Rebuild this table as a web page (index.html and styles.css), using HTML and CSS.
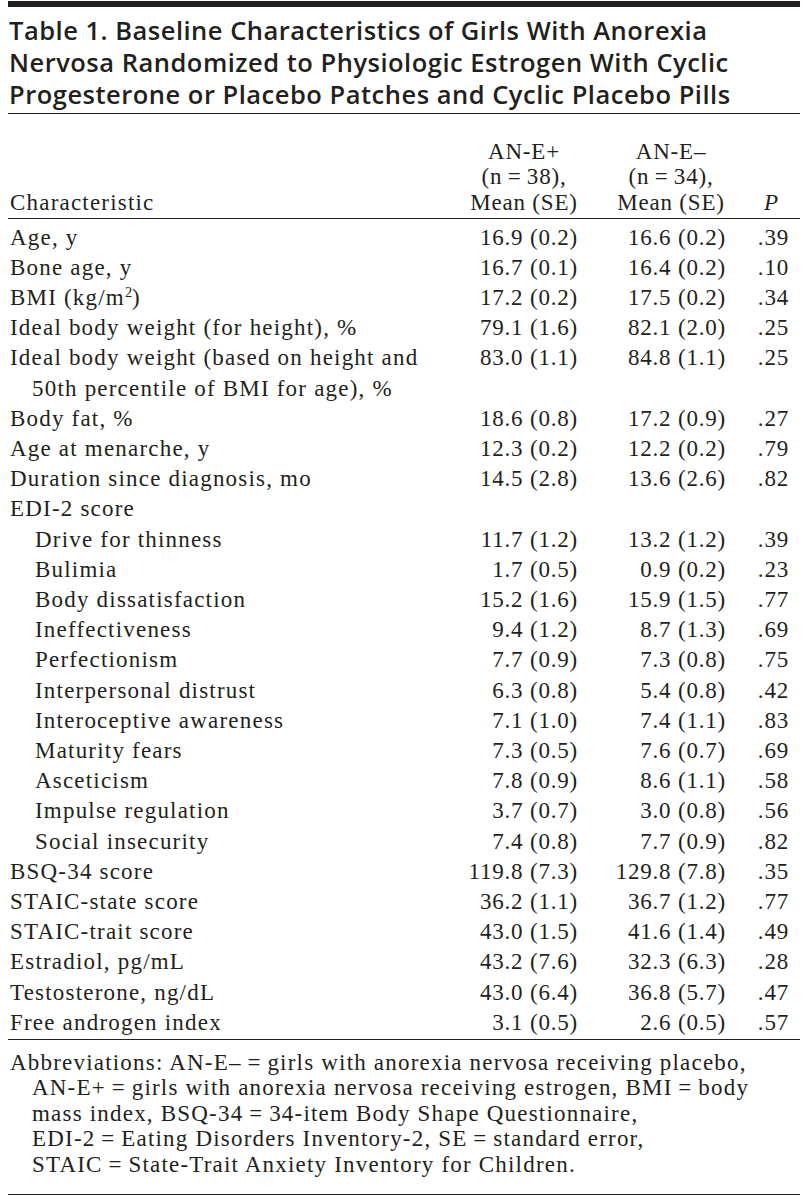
FILE: index.html
```html
<!DOCTYPE html>
<html lang="en">
<head>
<meta charset="utf-8">
<title>Table 1</title>
<link rel="stylesheet" href="styles.css">
</head>
<body>
<div class="page">
  <div class="bar"></div>
  <h1 class="title">Table 1. Baseline Characteristics of Girls With Anorexia<br>Nervosa Randomized to Physiologic Estrogen With Cyclic<br>Progesterone or Placebo Patches and Cyclic Placebo Pills</h1>
  <table class="data">
    <colgroup>
      <col class="c1"><col class="c2"><col class="c3"><col class="c4">
    </colgroup>
    <thead>
      <tr>
        <th class="lbl">Characteristic</th>
        <th class="h2">AN-E+<br>(n&#8201;=&#8201;38),<br>Mean (SE)</th>
        <th class="h3">AN-E–<br>(n&#8201;=&#8201;34),<br>Mean (SE)</th>
        <th class="h4"><i>P</i></th>
      </tr>
    </thead>
    <tbody>
      <tr><td class="lbl">Age, y</td><td class="num">16.9 (0.2)</td><td class="num">16.6 (0.2)</td><td class="p">.39</td></tr>
      <tr><td class="lbl">Bone age, y</td><td class="num">16.7 (0.1)</td><td class="num">16.4 (0.2)</td><td class="p">.10</td></tr>
      <tr><td class="lbl">BMI (kg/m<sup>2</sup>)</td><td class="num">17.2 (0.2)</td><td class="num">17.5 (0.2)</td><td class="p">.34</td></tr>
      <tr><td class="lbl">Ideal body weight (for height), %</td><td class="num">79.1 (1.6)</td><td class="num">82.1 (2.0)</td><td class="p">.25</td></tr>
      <tr><td class="lbl hang">Ideal body weight (based on height and<br>50th percentile of BMI for age), %</td><td class="num">83.0 (1.1)</td><td class="num">84.8 (1.1)</td><td class="p">.25</td></tr>
      <tr><td class="lbl">Body fat, %</td><td class="num">18.6 (0.8)</td><td class="num">17.2 (0.9)</td><td class="p">.27</td></tr>
      <tr><td class="lbl">Age at menarche, y</td><td class="num">12.3 (0.2)</td><td class="num">12.2 (0.2)</td><td class="p">.79</td></tr>
      <tr><td class="lbl">Duration since diagnosis, mo</td><td class="num">14.5 (2.8)</td><td class="num">13.6 (2.6)</td><td class="p">.82</td></tr>
      <tr><td class="lbl">EDI-2 score</td><td class="num"></td><td class="num"></td><td class="p"></td></tr>
      <tr><td class="lbl sub">Drive for thinness</td><td class="num">11.7 (1.2)</td><td class="num">13.2 (1.2)</td><td class="p">.39</td></tr>
      <tr><td class="lbl sub">Bulimia</td><td class="num">1.7 (0.5)</td><td class="num">0.9 (0.2)</td><td class="p">.23</td></tr>
      <tr><td class="lbl sub">Body dissatisfaction</td><td class="num">15.2 (1.6)</td><td class="num">15.9 (1.5)</td><td class="p">.77</td></tr>
      <tr><td class="lbl sub">Ineffectiveness</td><td class="num">9.4 (1.2)</td><td class="num">8.7 (1.3)</td><td class="p">.69</td></tr>
      <tr><td class="lbl sub">Perfectionism</td><td class="num">7.7 (0.9)</td><td class="num">7.3 (0.8)</td><td class="p">.75</td></tr>
      <tr><td class="lbl sub">Interpersonal distrust</td><td class="num">6.3 (0.8)</td><td class="num">5.4 (0.8)</td><td class="p">.42</td></tr>
      <tr><td class="lbl sub">Interoceptive awareness</td><td class="num">7.1 (1.0)</td><td class="num">7.4 (1.1)</td><td class="p">.83</td></tr>
      <tr><td class="lbl sub">Maturity fears</td><td class="num">7.3 (0.5)</td><td class="num">7.6 (0.7)</td><td class="p">.69</td></tr>
      <tr><td class="lbl sub">Asceticism</td><td class="num">7.8 (0.9)</td><td class="num">8.6 (1.1)</td><td class="p">.58</td></tr>
      <tr><td class="lbl sub">Impulse regulation</td><td class="num">3.7 (0.7)</td><td class="num">3.0 (0.8)</td><td class="p">.56</td></tr>
      <tr><td class="lbl sub">Social insecurity</td><td class="num">7.4 (0.8)</td><td class="num">7.7 (0.9)</td><td class="p">.82</td></tr>
      <tr><td class="lbl">BSQ-34 score</td><td class="num">119.8 (7.3)</td><td class="num">129.8 (7.8)</td><td class="p">.35</td></tr>
      <tr><td class="lbl">STAIC-state score</td><td class="num">36.2 (1.1)</td><td class="num">36.7 (1.2)</td><td class="p">.77</td></tr>
      <tr><td class="lbl">STAIC-trait score</td><td class="num">43.0 (1.5)</td><td class="num">41.6 (1.4)</td><td class="p">.49</td></tr>
      <tr><td class="lbl">Estradiol, pg/mL</td><td class="num">43.2 (7.6)</td><td class="num">32.3 (6.3)</td><td class="p">.28</td></tr>
      <tr><td class="lbl">Testosterone, ng/dL</td><td class="num">43.0 (6.4)</td><td class="num">36.8 (5.7)</td><td class="p">.47</td></tr>
      <tr><td class="lbl">Free androgen index</td><td class="num">3.1 (0.5)</td><td class="num">2.6 (0.5)</td><td class="p">.57</td></tr>
    </tbody>
  </table>
  <p class="notes">Abbreviations: AN-E–&#8201;=&#8201;girls with anorexia nervosa receiving placebo,<br>AN-E+&#8201;=&#8201;girls with anorexia nervosa receiving estrogen, BMI&#8201;=&#8201;body<br>mass index, BSQ-34&#8201;=&#8201;34-item Body Shape Questionnaire,<br>EDI-2&#8201;=&#8201;Eating Disorders Inventory-2, SE&#8201;=&#8201;standard error,<br>STAIC&#8201;=&#8201;State-Trait Anxiety Inventory for Children.</p>
</div>
</body>
</html>
```

FILE: styles.css
```css
html, body {
  margin: 0;
  padding: 0;
  background: #ffffff;
}

.page {
  margin: 1px 0 0 8px;
  width: 792px;
  color: #231f20;
  font-family: "Liberation Serif", "Times New Roman", serif;
  font-size: 23px;
  letter-spacing: 1.2px;
}

.bar {
  height: 6px;
  background: #231f20;
}

.title {
  margin: 7px 0 0;
  padding: 0 0 3px 1px;
  font-family: "Open Sans", "Noto Sans", sans-serif;
  font-weight: 600;
  font-size: 25.5px;
  line-height: 32px;
  letter-spacing: 0.5px;
  border-bottom: 1px solid #231f20;
}

.data {
  width: 792px;
  table-layout: fixed;
  border-collapse: collapse;
  border-bottom: 1px solid #231f20;
}

.c1 { width: 448px; }
.c2 { width: 136px; }
.c3 { width: 148px; }
.c4 { width: 60px; }

.data th {
  font-weight: normal;
  line-height: 25.5px;
  padding: 24.5px 0 3px;
  vertical-align: bottom;
  white-space: nowrap;
  border-bottom: 1px solid #231f20;
}

.data th.lbl { text-align: left; padding-left: 2px; }
.data th.h2 { text-align: center; letter-spacing: 0.8px; }
.data th.h3 { text-align: center; padding-left: 10px; letter-spacing: 0.8px; }
.data th.h4 { text-align: center; padding-left: 3px; }

.data td {
  padding: 0;
  line-height: 30.2px;
  vertical-align: top;
  white-space: nowrap;
}

.data tbody tr:first-child td { padding-top: 3.5px; }
.data tbody tr:last-child td { padding-bottom: 1px; }

.data td.lbl { padding-left: 2px; }
.data td.sub { padding-left: 27px; }
.data td.hang { padding-left: 24px; text-indent: -22px; }

.data td.num {
  text-align: right;
  padding-right: 14px;
  letter-spacing: 0.8px;
}

.data td.p {
  text-align: right;
  padding-right: 11px;
  letter-spacing: 0.8px;
}

sup {
  font-size: 0.62em;
  line-height: 0;
  vertical-align: 0.55em;
  letter-spacing: 0;
}

.notes {
  margin: 0;
  padding: 10px 0 16.5px 24px;
  text-indent: -22px;
  line-height: 25.5px;
  white-space: nowrap;
  border-bottom: 1px solid #231f20;
}
```
